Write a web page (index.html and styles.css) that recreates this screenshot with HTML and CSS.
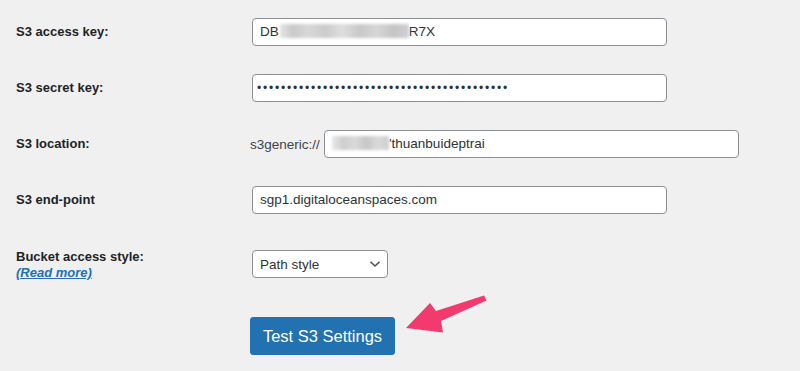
FILE: index.html
```html
<!DOCTYPE html>
<html lang="en">
<head>
    <meta charset="UTF-8">
    <meta name="viewport" content="width=device-width, initial-scale=1.0">
    <title>S3 Settings</title>
    <link rel="stylesheet" href="styles.css">
</head>
<body>
    <div class="settings">
        <div class="row">
            <div class="label">S3 access key:</div>
            <div class="field">DB<span class="blur blur-key"></span>R7X</div>
        </div>

        <div class="row">
            <div class="label">S3 secret key:</div>
            <div class="field"><span class="dots">••••••••••••••••••••••••••••••••••••••••••</span></div>
        </div>

        <div class="row">
            <div class="label">S3 location:</div>
            <div class="location">
                <span class="prefix">s3generic://</span>
                <div class="field"><span class="blur blur-bucket"></span>'thuanbuideptrai</div>
            </div>
        </div>

        <div class="row">
            <div class="label">S3 end-point</div>
            <div class="field">sgp1.digitaloceanspaces.com</div>
        </div>

        <div class="row row-top">
            <div class="label">
                Bucket access style:<br>
                <a href="#" class="more">(Read more)</a>
            </div>
            <div class="select">
                <span>Path style</span>
                <svg width="12" height="8" viewBox="0 0 12 8"><path d="M1.5 1.8 L6 6 L10.5 1.8" fill="none" stroke="#50575e" stroke-width="1.6"/></svg>
            </div>
        </div>

        <div class="actions">
            <button class="button">Test S3 Settings</button>
        </div>
    </div>

    <!-- annotation arrow -->
    <svg class="arrow" width="800" height="371" viewBox="0 0 800 371">
        <polygon points="406,328 430,303 436,311 484,295.5 486.5,300.5 441,321 443,332.5" fill="#f23a6e"/>
    </svg>
</body>
</html>
```

FILE: styles.css
```css
body {
    margin: 0;
    padding: 4px 16px 0;
    background-color: #f0f0f1;
    color: #1d2327;
    font-family: "Liberation Sans", Arial, sans-serif;
    font-size: 13.5px;
}
.row {
    display: grid;
    grid-template-columns: 236px auto;
    align-items: center;
    height: 56px;
}
.row-top {
    align-items: start;
    height: auto;
    padding-top: 21px;
}
.label {
    font-size: 13px;
    font-weight: bold;
    line-height: 16px;
}
.more {
    color: #2271b1;
    font-style: italic;
    text-decoration: underline;
}
.field {
    width: 399px;
    height: 26px;
    line-height: 26px;
    padding: 0 7px;
    background-color: #fff;
    border: 1px solid #8c8f94;
    border-radius: 4px;
    color: #2c3338;
    white-space: nowrap;
    overflow: hidden;
}
.blur {
    display: inline-block;
    height: 14px;
    vertical-align: -2px;
    filter: blur(1.5px);
}
.blur-key {
    width: 129px;
    margin-left: 1px;
    background: linear-gradient(90deg, #e4e4e4 0%, #c9c9c9 10%, #d8d8d8 22%, #cbcbcb 35%, #dedede 48%, #c8c8c8 62%, #d6d6d6 75%, #c4c4c4 88%, #d0d0d0 100%);
}
.blur-bucket {
    width: 57px;
    background: linear-gradient(90deg, #e8e8e8 0%, #cdcdcd 20%, #dadada 40%, #c6c6c6 60%, #d9d9d9 80%, #cfcfcf 100%);
}
.dots {
    margin-left: -3px;
    font-size: 12px;
    letter-spacing: 1.8px;
    color: #2c3338;
}
.location {
    display: flex;
    align-items: center;
}
.prefix {
    width: 74px;
    margin-left: -2px;
    color: #3c434a;
}
.select {
    display: flex;
    align-items: center;
    justify-content: space-between;
    width: 121px;
    height: 26px;
    margin-top: 1px;
    padding: 0 6px 0 7px;
    background-color: #fff;
    border: 1px solid #8c8f94;
    border-radius: 4px;
    color: #2c3338;
}
.actions {
    padding: 36px 0 0 234px;
}
.button {
    width: 145px;
    height: 38px;
    padding: 0;
    background-color: #2271b1;
    border: 1px solid #2271b1;
    border-radius: 3px;
    color: #fff;
    font-family: "Liberation Sans", Arial, sans-serif;
    font-size: 16.5px;
    cursor: pointer;
}
.arrow {
    position: absolute;
    top: 0;
    left: 0;
    pointer-events: none;
}
```
